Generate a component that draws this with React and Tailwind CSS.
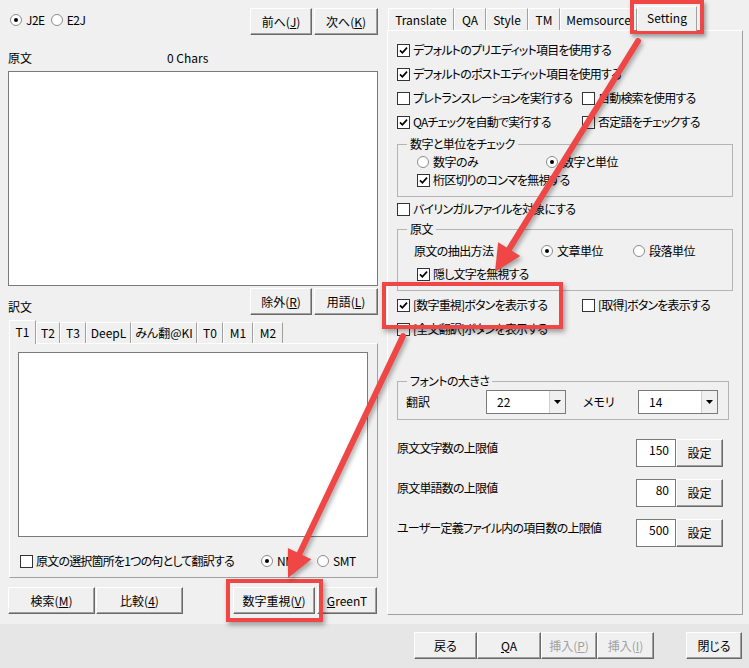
import clsx from "clsx";

const RED = "#ef4646";

function Tick() {
  return (
    <svg width="9" height="9" viewBox="0 0 9 9">
      <path d="M1 4.3 L3.4 6.8 L8 1.6" fill="none" stroke="#000" strokeWidth="1.7" />
    </svg>
  );
}

function Check({ on, label, className }) {
  return (
    <div className={clsx("flex items-center h-[16px] gap-[3px]", className)}>
      <span className="w-[13px] h-[13px] shrink-0 border border-[#333] bg-white flex items-center justify-center">
        {on && <Tick />}
      </span>
      <span className="whitespace-nowrap tracking-[-0.8px]">{label}</span>
    </div>
  );
}

function Radio({ on, label, className }) {
  return (
    <div className={clsx("flex items-center h-[16px] gap-[4px]", className)}>
      <span className="w-[12px] h-[12px] shrink-0 rounded-full border border-[#8c8c8c] bg-white flex items-center justify-center">
        {on && <span className="w-[4px] h-[4px] rounded-full bg-black" />}
      </span>
      <span className="whitespace-nowrap tracking-[-0.5px]">{label}</span>
    </div>
  );
}

function Btn({ children, className, disabled }) {
  return (
    <div
      className={clsx(
        "h-[27px] shrink-0 flex items-center justify-center bg-[#f0f0f0] border border-t-white border-l-white border-r-[#696969] border-b-[#696969] shadow-[inset_-1px_-1px_0_#a0a0a0]",
        disabled ? "text-[#a0a0a0]" : "text-black",
        className
      )}
    >
      {children}
    </div>
  );
}

function Tab({ label, w, active, small }) {
  return (
    <div
      className={clsx(
        "flex items-center justify-center bg-[#f0f0f0] border-t border-l border-r border-t-white border-l-white border-r-[#a0a0a0] whitespace-nowrap overflow-hidden",
        active
          ? small
            ? "h-[24px] -mb-px relative z-10 pb-[2px]"
            : "h-[25px] -mb-px relative z-10 pb-[2px]"
          : small
          ? "h-[21px]"
          : "h-[22px]",
        w
      )}
    >
      {label}
    </div>
  );
}

function Combo({ value }) {
  return (
    <div className="w-[80px] h-[24px] bg-white border border-[#7a7a7a] flex">
      <span className="flex-1 pl-[10px] flex items-center">{value}</span>
      <span className="w-[16px] bg-[#f0f0f0] border-l border-[#cfcfcf] flex items-center justify-center">
        <svg width="7" height="4" viewBox="0 0 7 4">
          <path d="M0 0H7L3.5 4Z" fill="#000" />
        </svg>
      </span>
    </div>
  );
}

function Group({ title, className, children }) {
  return (
    <fieldset className={clsx("border border-[#b4b4b4]", className)}>
      <legend className="ml-[9px] px-[3px] leading-[16px] tracking-[-0.6px]">{title}</legend>
      {children}
    </fieldset>
  );
}

function Limit({ label, value, className }) {
  return (
    <div className={clsx("flex items-start justify-between w-[326px]", className)}>
      <span className="tracking-[-0.8px] mt-[1px]">{label}</span>
      <div className="flex">
        <div className="w-[40px] h-[28px] bg-white border border-[#7a7a7a] flex justify-end pr-[6px] pt-[2px]">
          {value}
        </div>
        <Btn className="w-[47px] h-[28px]">設定</Btn>
      </div>
    </div>
  );
}

function Arrow({ from, to }) {
  const [x1, y1] = from;
  const [x2, y2] = to;
  const len = Math.hypot(x2 - x1, y2 - y1);
  const ux = (x2 - x1) / len;
  const uy = (y2 - y1) / len;
  const L = 27;
  const H = 13;
  const bx = x2 - ux * L;
  const by = y2 - uy * L;
  const pts = `${x2},${y2} ${bx - uy * H},${by + ux * H} ${bx + uy * H},${by - ux * H}`;
  return (
    <g>
      <line x1={x1} y1={y1} x2={bx + ux * 4} y2={by + uy * 4} stroke={RED} strokeWidth="6" strokeLinecap="round" />
      <polygon points={pts} fill={RED} />
    </g>
  );
}

export default function App() {
  return (
    <div className="relative w-[749px] h-[668px] overflow-hidden bg-[#f0f0f0] text-black text-[12px] leading-[16px] font-['Noto_Sans_CJK_JP',sans-serif] [font-feature-settings:'palt']">
      <div className="flex h-[624px]">
        {/* left column */}
        <div className="w-[387px] shrink-0 pl-[8px] pr-[9px] pt-[8px] flex flex-col">
          <div className="flex items-center justify-between h-[27px]">
            <div className="flex items-center ml-[2px] -mt-[3px]">
              <Radio on label="J2E" />
              <Radio label="E2J" className="ml-[6px]" />
            </div>
            <div className="flex gap-[2px]">
              <Btn className="w-[62px]">
                前へ(<span className="underline">J</span>)
              </Btn>
              <Btn className="w-[64px]">
                次へ(<span className="underline">K</span>)
              </Btn>
            </div>
          </div>

          <div className="mt-[15px] flex items-center h-[16px]">
            <span className="w-[159px]">原文</span>
            <span>0 Chars</span>
          </div>
          <div className="mt-[5px] h-[215px] bg-white border border-[#7a7a7a]" />

          <div className="mt-[2px] flex items-end justify-between h-[27px]">
            <span>訳文</span>
            <div className="flex gap-[2px]">
              <Btn className="w-[62px]">
                除外(<span className="underline">R</span>)
              </Btn>
              <Btn className="w-[64px]">
                用語(<span className="underline">L</span>)
              </Btn>
            </div>
          </div>

          <div className="mt-[5px] ml-[1px] flex items-end">
            <Tab small active label="T1" w="w-[27px]" />
            <Tab small label="T2" w="w-[24px]" />
            <Tab small label="T3" w="w-[26px]" />
            <Tab small label="DeepL" w="w-[45px]" />
            <Tab small label="みん翻@KI" w="w-[66px]" />
            <Tab small label="T0" w="w-[26px]" />
            <Tab small label="M1" w="w-[30px]" />
            <Tab small label="M2" w="w-[30px]" />
          </div>
          <div className="ml-[1px] h-[235px] border border-t-white border-l-white border-r-[#a0a0a0] border-b-[#a0a0a0] px-[8px] pt-[8px] flex flex-col">
            <div className="h-[185px] w-[350px] bg-white border border-[#7a7a7a]" />
            <div className="mt-[16px] flex items-center">
              <Check label="原文の選択箇所を1つの句として翻訳する" className="w-[241px] ml-[2px]" />
              <Radio on label="NMT" className="w-[56px]" />
              <Radio label="SMT" />
            </div>
          </div>

          <div className="mt-[9px] flex">
            <Btn className="w-[87px]">
              検索(<span className="underline">M</span>)
            </Btn>
            <Btn className="w-[87px] ml-[1px]">
              比較(<span className="underline">4</span>)
            </Btn>
            <Btn className="w-[82px] ml-[50px]">
              数字重視(<span className="underline">V</span>)
            </Btn>
            <Btn className="w-[60px] ml-[2px]">
              <span className="underline">G</span>reenT
            </Btn>
          </div>
        </div>

        {/* right column */}
        <div className="pt-[6px] flex flex-col">
          <div className="flex items-end pl-[1px]">
            <Tab label="Translate" w="w-[66px]" />
            <Tab label="QA" w="w-[32px]" />
            <Tab label="Style" w="w-[42px]" />
            <Tab label="TM" w="w-[32px]" />
            <Tab label="Memsource" w="w-[77px]" />
            <Tab active label="Setting" w="w-[60px]" />
          </div>
          <div className="w-[356px] h-[585px] border border-t-white border-l-white border-r-[#a0a0a0] border-b-[#a0a0a0] pl-[9px] pt-[11px] flex flex-col">
            <Check on label="デフォルトのプリエディット項目を使用する" />
            <Check on className="mt-[8px]" label="デフォルトのポストエディット項目を使用する" />
            <div className="mt-[8px] flex">
              <Check className="w-[185px]" label="プレトランスレーションを実行する" />
              <Check label="自動検索を使用する" />
            </div>
            <div className="mt-[8px] flex">
              <Check on className="w-[185px]" label="QAチェックを自動で実行する" />
              <Check label="否定語をチェックする" />
            </div>

            <Group title="数字と単位をチェック" className="mt-[6px] w-[336px] pb-[8px]">
              <div className="pl-[19px] mt-[2px] flex">
                <Radio label="数字のみ" className="w-[129px]" />
                <Radio on label="数字と単位" />
              </div>
              <Check on className="ml-[19px] mt-[2px]" label="桁区切りのコンマを無視する" />
            </Group>

            <Check className="mt-[4px]" label="バイリンガルファイルを対象にする" />

            <Group title="原文" className="mt-[4px] w-[336px] pb-[8px]">
              <div className="pl-[16px] mt-[6px] flex items-center">
                <span className="w-[127px] tracking-[-0.6px]">原文の抽出方法</span>
                <Radio on label="文章単位" className="w-[92px]" />
                <Radio label="段落単位" />
              </div>
              <Check on className="ml-[19px] mt-[7px]" label="隠し文字を無視する" />
            </Group>

            <div className="mt-[6px] flex">
              <Check on className="w-[185px]" label="[数字重視]ボタンを表示する" />
              <Check label="[取得]ボタンを表示する" />
            </div>
            <Check className="mt-[8px]" label="[全文翻訳]ボタンを表示する" />

            <Group title="フォントの大きさ" className="mt-[36px] w-[332px] pb-[5px]">
              <div className="pl-[8px] mt-[1px] flex items-center">
                <span className="w-[80px]">翻訳</span>
                <Combo value="22" />
                <span className="w-[55px] ml-[17px]">メモリ</span>
                <Combo value="14" />
              </div>
            </Group>

            <Limit className="mt-[19px]" label="原文文字数の上限値" value="150" />
            <Limit className="mt-[12px]" label="原文単語数の上限値" value="80" />
            <Limit className="mt-[12px]" label="ユーザー定義ファイル内の項目数の上限値" value="500" />
          </div>
        </div>
      </div>

      {/* bottom band */}
      <div className="h-[44px] bg-[#e6e6e6] flex justify-end items-start pt-[8px] pr-[7px]">
        <div className="flex">
          <Btn className="w-[63px]">戻る</Btn>
          <Btn className="w-[64px]">
            <span className="underline">Q</span>A
          </Btn>
          <Btn disabled className="w-[56px]">
            挿入(<span className="underline">P</span>)
          </Btn>
          <Btn disabled className="w-[57px]">
            挿入(<span className="underline">I</span>)
          </Btn>
        </div>
        <Btn className="w-[56px] ml-[32px]">閉じる</Btn>
      </div>

      {/* red annotations */}
      <div className="absolute left-[630px] top-0 w-[74px] h-[34px] border-[4px] border-[#ef4646] shadow-[2px_3px_4px_rgba(0,0,0,0.35)] pointer-events-none" />
      <div className="absolute left-[382px] top-[282px] w-[181px] h-[47px] border-[4px] border-[#ef4646] shadow-[2px_3px_5px_rgba(0,0,0,0.35)] pointer-events-none" />
      <div className="absolute left-[226px] top-[579px] w-[97px] h-[43px] border-[4px] border-[#ef4646] shadow-[2px_3px_5px_rgba(0,0,0,0.35)] pointer-events-none" />
      <svg
        className="absolute inset-0 pointer-events-none drop-shadow-[2px_3px_2px_rgba(0,0,0,0.3)]"
        width="749"
        height="668"
      >
        <Arrow from={[638, 41]} to={[495, 272]} />
        <Arrow from={[403, 336]} to={[288, 578]} />
      </svg>
    </div>
  );
}
